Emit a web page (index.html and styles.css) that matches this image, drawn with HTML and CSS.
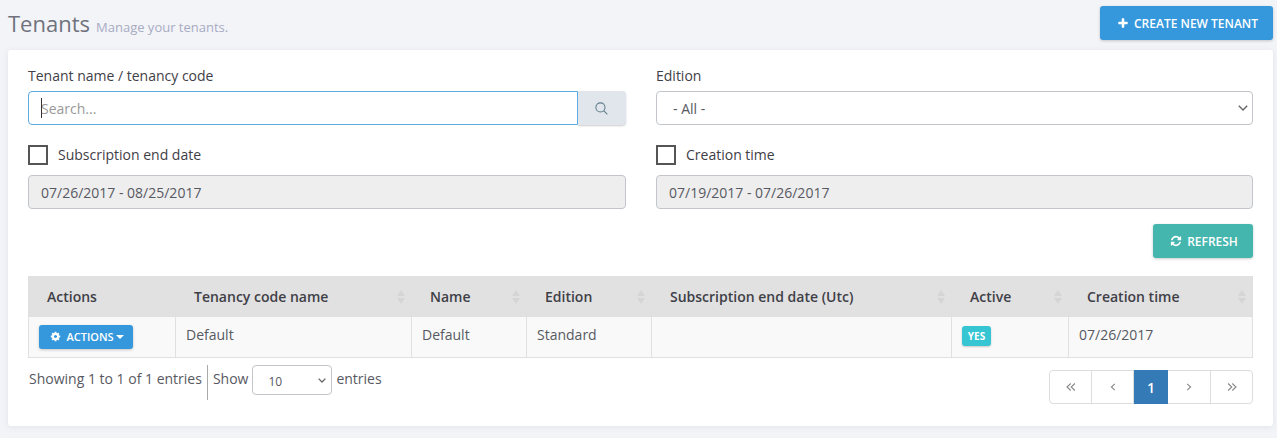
FILE: index.html
```html
<!DOCTYPE html>
<html lang="en">
<head>
<meta charset="utf-8">
<title>Tenants</title>
<link rel="stylesheet" href="styles.css">
</head>
<body>
<header class="page-head">
  <div class="titles">
    <h1 class="title">Tenants</h1>
    <span class="subtitle">Manage your tenants.</span>
  </div>
  <button class="btn btn-blue btn-create" type="button">
    <svg class="ico" viewBox="0 0 1408 1792"><path d="M1408 800v192q0 40-28 68t-68 28h-416v416q0 40-28 68t-68 28h-192q-40 0-68-28t-28-68v-416h-416q-40 0-68-28t-28-68v-192q0-40 28-68t68-28h416v-416q0-40 28-68t68-28h192q40 0 68 28t28 68v416h416q40 0 68 28t28 68z"/></svg>
    Create new tenant
  </button>
</header>

<main class="card">
  <div class="filters">
    <div class="field">
      <label class="label">Tenant name / tenancy code</label>
      <div class="search">
        <div class="search-box">
          <input class="input input-focus" type="text" placeholder="Search...">
          <span class="caret-line"></span>
        </div>
        <button class="search-btn" type="button" aria-label="Search">
          <svg class="search-ico" viewBox="0 0 16 16"><circle cx="6.7" cy="6.7" r="5.6"/><path d="M10.6 10.6l4.6 4.6"/></svg>
        </button>
      </div>
    </div>
    <div class="field">
      <label class="label">Edition</label>
      <select class="input select"><option>- All -</option></select>
    </div>
    <div class="field">
      <label class="check"><span class="box"></span><span class="check-text">Subscription end date</span></label>
      <input class="input input-off" type="text" value="07/26/2017 - 08/25/2017" disabled>
    </div>
    <div class="field">
      <label class="check"><span class="box"></span><span class="check-text">Creation time</span></label>
      <input class="input input-off" type="text" value="07/19/2017 - 07/26/2017" disabled>
    </div>
  </div>

  <div class="refresh-row">
    <button class="btn btn-teal btn-refresh" type="button">
      <svg class="ico ico-refresh" viewBox="0 0 1792 1792"><path d="M1639 1056q0 5-1 7-64 268-268 434.5t-478 166.5q-146 0-282.5-55t-243.5-157l-129 129q-19 19-45 19t-45-19-19-45v-448q0-26 19-45t45-19h448q26 0 45 19t19 45-19 45l-137 137q71 66 161 102t187 36q134 0 250-65t186-179q11-17 53-117 8-23 30-23h192q13 0 22.5 9.5t9.5 22.5zm25-800v448q0 26-19 45t-45 19h-448q-26 0-45-19t-19-45 19-45l138-138q-148-137-349-137-134 0-250 65t-186 179q-11 17-53 117-8 23-30 23h-199q-13 0-22.5-9.5t-9.5-22.5v-7q65-268 270-434.5t480-166.5q146 0 284 55.5t245 156.5l130-129q19-19 45-19t45 19 19 45z"/></svg>
      Refresh
    </button>
  </div>

  <table class="grid">
    <colgroup>
      <col class="c1"><col class="c2"><col class="c3"><col class="c4"><col class="c5"><col class="c6"><col class="c7">
    </colgroup>
    <thead>
      <tr>
        <th>Actions</th>
        <th class="sortable">Tenancy code name</th>
        <th class="sortable">Name</th>
        <th class="sortable">Edition</th>
        <th class="sortable">Subscription end date (Utc)</th>
        <th class="sortable">Active</th>
        <th class="sortable">Creation time</th>
      </tr>
    </thead>
    <tbody>
      <tr>
        <td class="cell-action">
          <button class="btn btn-blue btn-actions" type="button">
            <svg class="ico ico-cog" viewBox="0 0 1792 1792"><path d="M1152 896q0-106-75-181t-181-75-181 75-75 181 75 181 181 75 181-75 75-181zm512-109v222q0 12-8 23t-20 13l-185 28q-19 54-39 91 35 50 107 138 10 12 10 25t-9 23q-27 37-99 108t-94 71q-12 0-26-9l-138-108q-44 23-91 38-16 136-29 186-7 28-36 28h-222q-14 0-24.5-8.5t-11.5-21.5l-28-184q-49-16-90-37l-141 107q-10 9-25 9-14 0-25-11-126-114-165-168-7-10-7-23 0-12 8-23 15-21 51-66.5t54-70.5q-27-50-41-99l-183-27q-13-2-21-12.5t-8-23.5v-222q0-12 8-23t19-13l186-28q14-46 39-92-40-57-107-138-10-12-10-24 0-10 9-23 26-36 98.5-107.5t94.5-71.5q13 0 26 10l138 107q44-23 91-38 16-136 29-186 7-28 36-28h222q14 0 24.5 8.5t11.5 21.5l28 184q49 16 90 37l142-107q9-9 24-9 13 0 25 10 129 119 165 170 7 8 7 22 0 12-8 23-15 21-51 66.5t-54 70.5q26 50 41 98l183 28q13 2 21 12.5t8 23.5z"/></svg>
            Actions<span class="drop"></span>
          </button>
        </td>
        <td>Default</td>
        <td>Default</td>
        <td>Standard</td>
        <td></td>
        <td class="cell-badge"><span class="badge">Yes</span></td>
        <td>07/26/2017</td>
      </tr>
    </tbody>
  </table>

  <div class="foot">
    <div class="info">
      <span class="showing">Showing 1 to 1 of 1 entries</span>
      <span class="length">Show <select class="len-select"><option>10</option></select> entries</span>
    </div>
    <nav class="pager">
      <a class="pg"><svg class="pg-ico" viewBox="0 0 10 10"><path d="M4.7 1.5L1 5l3.7 3.5M8.9 1.5L5.2 5l3.7 3.5"/></svg></a>
      <a class="pg"><svg class="pg-ico" viewBox="0 0 10 10"><path d="M6.8 1.8L3.4 5l3.4 3.2"/></svg></a>
      <a class="pg pg-on">1</a>
      <a class="pg pg-next"><svg class="pg-ico" viewBox="0 0 10 10"><path d="M3.2 1.8L6.6 5 3.2 8.2"/></svg></a>
      <a class="pg pg-last"><svg class="pg-ico" viewBox="0 0 10 10"><path d="M1.1 1.5L4.8 5 1.1 8.5M5.3 1.5L9 5 5.3 8.5"/></svg></a>
    </nav>
  </div>
</main>
</body>
</html>
```
FILE: styles.css
```css
* { box-sizing: border-box; }
html, body { height: 100%; }
body {
  margin: 0;
  padding: 0 4px 0 8px;
  background: #f3f4f8;
  font-family: "Open Sans", sans-serif;
  font-size: 14px;
  color: #575962;
  overflow: hidden;
}
.page-head {
  height: 50px;
  padding-top: 6px;
  display: flex;
  justify-content: space-between;
  align-items: flex-start;
}
.titles { display: flex; align-items: baseline; gap: 6px; padding-top: 1px; }
.title { margin: 0; font-size: 22px; font-weight: 400; line-height: 32px; color: #6f727d; }
.subtitle { font-size: 13px; color: #a7abc3; }

.btn {
  display: inline-flex;
  align-items: center;
  justify-content: center;
  border: 0;
  border-radius: 3px;
  color: #fff;
  font-family: inherit;
  font-weight: 600;
  text-transform: uppercase;
  white-space: nowrap;
  box-shadow: 0 1px 3px rgba(0, 0, 0, .2);
}
.btn-blue { background: #3598dc; }
.btn-teal { background: #44b6ae; }
.btn-create { width: 173px; height: 34px; padding: 0 0 0 18px; justify-content: flex-start; font-size: 12px; gap: 6px; }
.btn-refresh { width: 100px; height: 34px; padding: 0 0 0 2px; font-size: 12px; gap: 5px; }
.btn-actions { width: 94px; height: 24px; padding: 0 0 1px 2px; font-size: 11px; gap: 5px; }
.ico { width: 10px; height: 12px; fill: #fff; flex: none; }
.ico-refresh { width: 12px; height: 12px; }
.ico-cog { width: 11px; height: 11px; }
.drop {
  margin-left: -3px;
  border: 4px solid transparent;
  border-top-color: #fff;
  border-bottom: 0;
}

.card {
  height: 376px;
  padding: 16px 20px 0;
  background: #fff;
  border-radius: 3px;
  box-shadow: 0 1px 6px rgba(87, 89, 98, .1);
}
.filters {
  display: grid;
  grid-template-columns: 598px 597px;
  column-gap: 30px;
  row-gap: 20px;
}
.label { display: block; height: 25px; line-height: 20px; color: #3f4047; }
.input {
  display: block;
  width: 100%;
  height: 34px;
  padding: 0 12px;
  border: 1px solid #c2c5c9;
  border-radius: 4px;
  background: #fff;
  font-family: inherit;
  font-size: 14px;
  color: #575962;
}
.input::placeholder { color: #999; opacity: 1; }
.input-focus { border-color: #5dade2; border-radius: 4px 0 0 4px; outline: 0; }
.input-off { background: #eee; color: #575962; opacity: 1; -webkit-text-fill-color: #575962; }
.select {
  appearance: none;
  padding-left: 16px;
  background: #fff url("data:image/svg+xml,%3Csvg xmlns='http://www.w3.org/2000/svg' width='10' height='6'%3E%3Cpath d='M.8.8L5 5l4.2-4.2' fill='none' stroke='%23666' stroke-width='1.4'/%3E%3C/svg%3E") no-repeat right 4px center;
}
.search { display: flex; }
.search-box { position: relative; flex: 1; }
.caret-line {
  position: absolute;
  left: 13px;
  top: 7px;
  width: 1px;
  height: 20px;
  background: #333;
}
.search-btn {
  width: 48px;
  height: 34px;
  padding: 0 1px 0 0;
  border: 0;
  border-radius: 0 4px 4px 0;
  background: #e1e5ec;
  box-shadow: 0 1px 2px rgba(0, 0, 0, .2);
  display: flex;
  align-items: center;
  justify-content: center;
}
.search-ico { width: 13px; height: 13px; fill: none; stroke: #5e7d8a; stroke-width: 1.3; }
.check { display: flex; align-items: flex-start; gap: 10px; height: 20px; margin-bottom: 10px; color: #3f4047; }
.check-text { line-height: 19px; }
.box { width: 20px; height: 20px; border: 2px solid #555; background: #fff; flex: none; }

.refresh-row { display: flex; justify-content: flex-end; margin-top: 15px; margin-bottom: 18px; }

.grid {
  width: 1224px;
  table-layout: fixed;
  border-collapse: collapse;
  font-size: 14px;
}
.c1 { width: 147px; } .c2 { width: 236px; } .c3 { width: 115px; } .c4 { width: 125px; }
.c5 { width: 300px; } .c6 { width: 117px; } .c7 { width: 184px; }
.grid th, .grid td { border: 1px solid #e0e0e0; }
.grid th {
  position: relative;
  height: 40px;
  padding: 0 18px;
  background: #e1e1e1;
  text-align: left;
  font-weight: 600;
  color: #3f4047;
}
.sortable::before, .sortable::after {
  content: "";
  position: absolute;
  right: 6px;
  border-left: 4px solid transparent;
  border-right: 4px solid transparent;
}
.sortable::before { top: 13px; border-bottom: 6.5px solid #d5d5d5; }
.sortable::after { top: 20.5px; border-top: 6.5px solid #d5d5d5; }
.grid td {
  height: 41px;
  padding: 8px 10px 10px;
  background: #f9f9f9;
  vertical-align: top;
  line-height: 20px;
}
.grid td.cell-action { padding: 8px 10px 0; }
.grid td.cell-badge { padding: 9px 10px 0; }
.badge {
  display: inline-block;
  width: 29px;
  height: 20px;
  border-radius: 3px;
  background: #36c6d3;
  color: #fff;
  font-size: 10px;
  font-weight: 700;
  line-height: 20px;
  text-align: center;
  text-transform: uppercase;
  box-shadow: 0 1px 2px rgba(0, 0, 0, .2);
  vertical-align: top;
}

.foot { display: flex; justify-content: space-between; align-items: flex-start; padding-top: 7px; }
.info { display: flex; padding-left: 1px; }
.showing { height: 35px; padding: 4px 5px 0 0; border-right: 1px solid #aaa; line-height: 20px; }
.length { padding-left: 5px; display: flex; gap: 4px; height: 30px; line-height: 28px; }
.len-select {
  appearance: none;
  width: 80px;
  height: 30px;
  padding: 2px 15px 0;
  border: 1px solid #c2c5c9;
  border-radius: 4px;
  background: #fff url("data:image/svg+xml,%3Csvg xmlns='http://www.w3.org/2000/svg' width='8' height='5'%3E%3Cpath d='M.6.6L4 4 7.4.6' fill='none' stroke='%23666' stroke-width='1.3'/%3E%3C/svg%3E") no-repeat right 5px center;
  font-family: inherit;
  font-size: 12px;
  color: #575962;
}
.pager {
  display: flex;
  margin-top: 5px;
  height: 34px;
  border: 1px solid #ddd;
  border-radius: 4px;
  background: #fff;
}
.pg {
  width: 42px;
  display: flex;
  align-items: center;
  justify-content: center;
  border-right: 1px solid #ddd;
  color: #fff;
  font-weight: 600;
}
.pg-next { width: 43px; }
.pg-last { width: 41px; border-right: 0; }
.pg-on { width: 34px; margin: -1px 0; background: #337ab7; border-right: 0; }
.pg-ico { width: 10px; height: 10px; fill: none; stroke: #888; stroke-width: 1.1; }
```
